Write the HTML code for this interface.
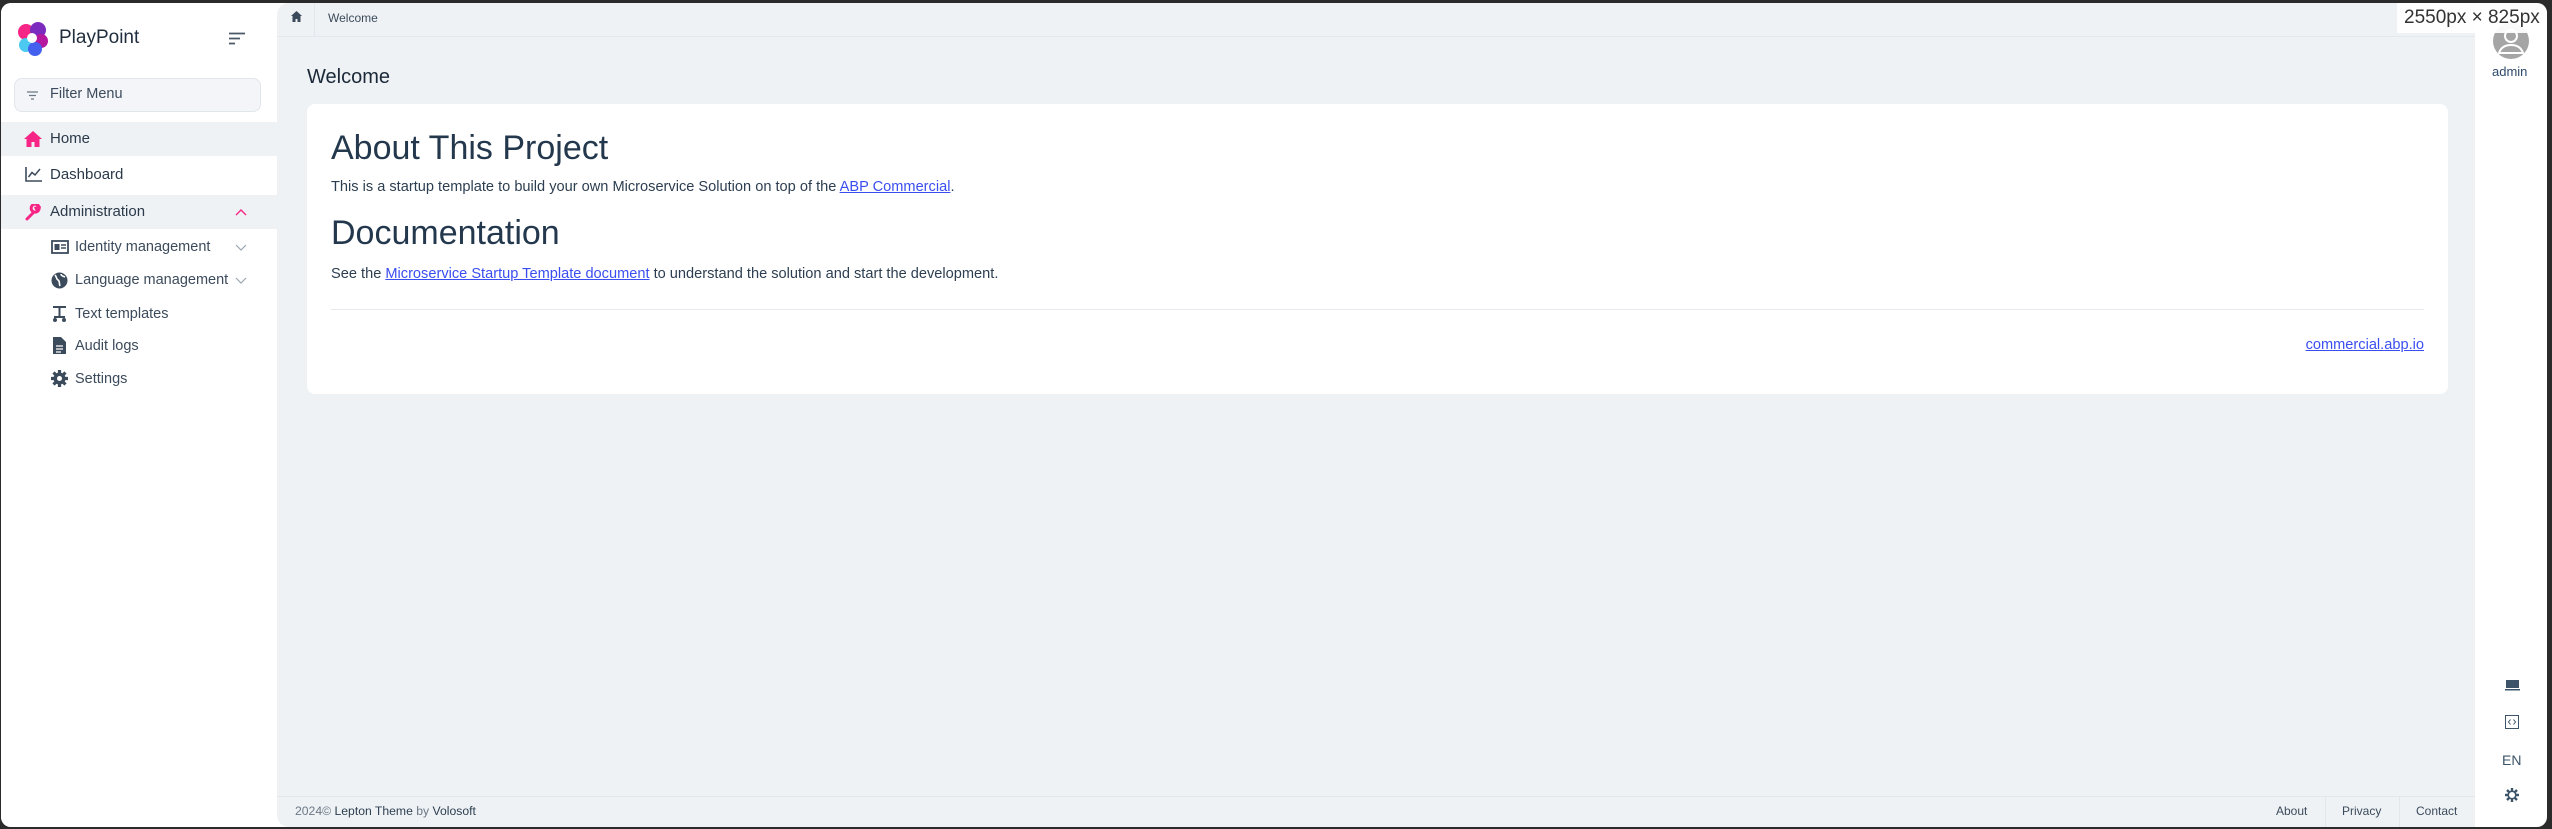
<!DOCTYPE html>
<html><head><meta charset="utf-8"><style>
*{margin:0;padding:0;box-sizing:border-box}
html,body{width:2552px;height:829px;overflow:hidden;background:#2b2b2b;font-family:"Liberation Sans",sans-serif;color:#2c3e50}
#page{position:absolute;left:1px;top:3px;width:2546px;height:824px;background:#fff;border-radius:10px;overflow:hidden}
#side{position:absolute;left:0;top:0;width:276px;height:824px;background:#fff}
#main{position:absolute;left:276px;top:0;width:2198px;height:824px;background:#eef2f5;border-radius:12px 0 0 12px}
.abs{position:absolute;white-space:nowrap}
.row{position:absolute;left:0;width:276px;height:34px;font-size:15px;color:#2b3a4a;line-height:34px}
.row .t{position:absolute;left:49px}
.sub{position:absolute;left:0;width:276px;font-size:14.5px;color:#3c4b5c;height:24px;line-height:24px}
.sub .t{position:absolute;left:74px}
.sub svg,.row svg{position:absolute}
a{color:#3a4ef0;text-decoration:underline}
</style></head><body>
<div id="page">
<div id="side">
  <svg class="abs" style="left:15px;top:18px" width="34" height="36" viewBox="0 0 34 36">
    <circle cx="10" cy="11" r="8" fill="#f72585"/><circle cx="22" cy="9" r="8" fill="#7b2cbf"/>
    <circle cx="25" cy="20" r="7" fill="#b5179e"/><circle cx="10" cy="24" r="7" fill="#4cc9f0"/>
    <circle cx="19" cy="28" r="7" fill="#4361ee"/><circle cx="16" cy="17" r="5" fill="#fff"/>
  </svg>
  <div class="abs" style="left:58px;top:24px;font-size:19px;color:#1f2d3d">PlayPoint</div>
  <svg class="abs" style="left:228px;top:29px" width="17" height="13"><path d="M0 1.5H16M0 6.5H11M0 11.5H6" stroke="#4a5868" stroke-width="1.8"/></svg>
  <div class="abs" style="left:13px;top:75px;width:247px;height:34px;background:#f3f5f8;border:1px solid #e1e6eb;border-radius:8px"></div>
  <svg class="abs" style="left:26px;top:88px" width="11" height="9"><path d="M0 1H11M2 4.5H9M4 8H7" stroke="#6b7785" stroke-width="1.3"/></svg>
  <div class="abs" style="left:49px;top:83px;font-size:14.5px;color:#3c4b5c">Filter Menu</div>

  <div class="row" style="top:119px;background:#eef2f5"><svg style="left:23px;top:9px" width="18" height="16" viewBox="0 0 18 16"><path d="M9 0L0 8h2.5v8h5v-5h3v5h5V8H18z" fill="#f72585"/></svg><span class="t">Home</span></div>
  <div class="row" style="top:155px"><svg style="left:24px;top:9px" width="17" height="15"><path d="M1 0V14H17" stroke="#3c4b5c" stroke-width="1.6" fill="none"/><path d="M3.5 10L7 5.5 10 8 15 2" stroke="#3c4b5c" stroke-width="1.5" fill="none"/></svg><span class="t">Dashboard</span></div>
  <div class="row" style="top:192px;background:#eef2f5"><svg style="left:24px;top:9px" width="17" height="17" viewBox="0 0 17 17"><path d="M2 15L9 8M9 8a4 4 0 1 1 5-5l-3 1 1 2 2-1a4 4 0 0 1-5 3" stroke="#f72585" stroke-width="3" fill="none" stroke-linecap="round"/></svg><span class="t">Administration</span><svg style="left:234px;top:13px" width="12" height="8"><path d="M1 7L6 2 11 7" stroke="#f72585" stroke-width="1.4" fill="none"/></svg></div>

  <div class="sub" style="top:232px"><svg style="left:50px;top:5px" width="18" height="14"><rect x="1" y="1" width="16" height="12" fill="none" stroke="#3c4b5c" stroke-width="1.8"/><rect x="3.5" y="4" width="5" height="6" fill="#3c4b5c"/><path d="M10 5h5M10 8h5" stroke="#3c4b5c" stroke-width="1.5"/></svg><span class="t">Identity management</span><svg style="left:234px;top:9px" width="12" height="8"><path d="M1 1L6 6 11 1" stroke="#9aa6b2" stroke-width="1.2" fill="none"/></svg></div>
  <div class="sub" style="top:265px"><svg style="left:50px;top:4px" width="17" height="17"><circle cx="8.5" cy="8.5" r="8" fill="#3c4b5c"/><path d="M4 3c2 2 1 4 3 5s1 4 2 6M10 2c0 2 2 2 4 3" stroke="#fff" stroke-width="1.6" fill="none"/></svg><span class="t">Language management</span><svg style="left:234px;top:9px" width="12" height="8"><path d="M1 1L6 6 11 1" stroke="#9aa6b2" stroke-width="1.2" fill="none"/></svg></div>
  <div class="sub" style="top:299px"><svg style="left:51px;top:4px" width="15" height="16"><path d="M1 1H14M7.5 1V11M2 11H13" stroke="#3c4b5c" stroke-width="2" fill="none"/><circle cx="3" cy="14" r="2" fill="#3c4b5c"/><circle cx="12" cy="14" r="2" fill="#3c4b5c"/></svg><span class="t">Text templates</span></div>
  <div class="sub" style="top:331px"><svg style="left:52px;top:3px" width="13" height="17"><path d="M0 0H8L13 5V17H0Z" fill="#3c4b5c"/><path d="M3 9H10M3 12H10M3 15H8" stroke="#fff" stroke-width="1.2"/></svg><span class="t">Audit logs</span></div>
  <div class="sub" style="top:364px"><svg style="left:50px;top:3px" width="17" height="17" viewBox="0 0 17 17"><circle cx="8.5" cy="8.5" r="6" fill="#3c4b5c"/><path d="M8.5 0V17M0 8.5H17M2.5 2.5L14.5 14.5M14.5 2.5L2.5 14.5" stroke="#3c4b5c" stroke-width="3.2"/><circle cx="8.5" cy="8.5" r="2.5" fill="#fff"/></svg><span class="t">Settings</span></div>
</div>

<div id="main">
  <svg class="abs" style="left:14px;top:8px" width="11" height="11"><path d="M5.5 0L0 5h1.5v6h3V8h2v3h3V5H11z" fill="#3c4b5c"/></svg>
  <div class="abs" style="left:37px;top:0;width:1px;height:33px;background:#e2e7ec"></div>
  <div class="abs" style="left:51px;top:8px;font-size:12px;color:#3c4b5c">Welcome</div>
  <div class="abs" style="left:0;top:33px;width:2198px;height:1px;background:#e4e9ee"></div>
  <div class="abs" style="left:30px;top:63px;font-size:20px;color:#1a2838">Welcome</div>
  <div class="abs" style="left:30px;top:101px;width:2141px;height:290px;background:#fff;border-radius:8px">
    <div class="abs" style="left:24px;top:25px;font-size:34px;color:#24384d">About This Project</div>
    <div class="abs" style="left:24px;top:75px;font-size:14.6px;color:#2c3e50">This is a startup template to build your own Microservice Solution on top of the <a>ABP Commercial</a>.</div>
    <div class="abs" style="left:24px;top:110px;font-size:34px;color:#24384d">Documentation</div>
    <div class="abs" style="left:24px;top:162px;font-size:14.6px;color:#2c3e50">See the <a>Microservice Startup Template document</a> to understand the solution and start the development.</div>
    <div class="abs" style="left:24px;top:205px;width:2093px;height:1px;background:#e6eaee"></div>
    <div class="abs" style="right:24px;top:233px;font-size:14.6px"><a>commercial.abp.io</a></div>
  </div>
  <div class="abs" style="left:0;top:793px;width:2198px;height:1px;background:#e2e7ec"></div>
  <div class="abs" style="left:18px;top:801px;font-size:12.2px;color:#6b7785">2024© <span style="color:#2c3e50">Lepton Theme</span> by <span style="color:#2c3e50">Volosoft</span></div>
  <div class="abs" style="left:2048px;top:794px;width:1px;height:30px;background:#e2e7ec"></div>
  <div class="abs" style="left:2122px;top:794px;width:1px;height:30px;background:#e2e7ec"></div>
  <div class="abs" style="left:1999px;top:801px;font-size:12px;color:#3c4b5c">About</div>
  <div class="abs" style="left:2065px;top:801px;font-size:12px;color:#3c4b5c">Privacy</div>
  <div class="abs" style="left:2139px;top:801px;font-size:12px;color:#3c4b5c">Contact</div>
</div>

<div class="abs" style="left:2492px;top:20px;width:36px;height:36px;border-radius:50%;background:#a5a5a5;overflow:hidden">
  <svg width="36" height="36"><circle cx="18" cy="13" r="6" fill="none" stroke="#fff" stroke-width="2"/><path d="M6 30c2-6 7-8 12-8s10 2 12 8Z" fill="none" stroke="#fff" stroke-width="2"/></svg>
</div>
<div class="abs" style="left:2491px;top:61px;font-size:13px;color:#2e4a6b">admin</div>
<div class="abs" style="left:2396px;top:0px;width:150px;height:30px;background:rgba(255,255,255,0.93);font-size:19px;color:#333;line-height:30px;padding-left:7px">2550px × 825px</div>
<svg class="abs" style="left:2504px;top:677px" width="15" height="11"><rect x="1" y="0" width="13" height="8" fill="#3d5468"/><rect x="0" y="9" width="15" height="1.5" fill="#3d5468"/></svg>
<svg class="abs" style="left:2504px;top:712px" width="14" height="14"><rect x="0.5" y="0.5" width="13" height="13" fill="none" stroke="#3d5468"/><path d="M5.5 4.5L3.5 7 5.5 9.5M8.5 4.5L10.5 7 8.5 9.5" stroke="#3d5468" fill="none"/></svg>
<div class="abs" style="left:2501px;top:749px;font-size:14px;color:#3d5468">EN</div>
<svg class="abs" style="left:2504px;top:785px" width="14" height="14" viewBox="0 0 14 14"><path d="M7 0V14M0 7H14M2 2L12 12M12 2L2 12" stroke="#3d5468" stroke-width="2.4"/><circle cx="7" cy="7" r="4.5" fill="#3d5468"/><circle cx="7" cy="7" r="3" fill="#fff"/></svg>
</div>
</body></html>
